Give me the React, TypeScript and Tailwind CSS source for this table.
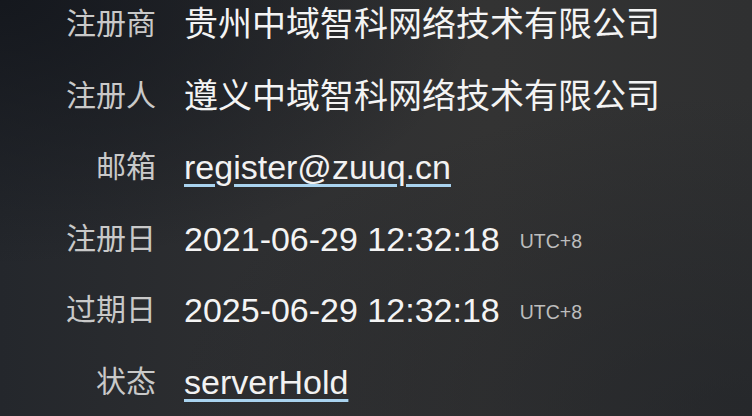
const rows: { label: string; value: string; kind?: "link" | "date" }[] = [
  { label: "注册商", value: "贵州中域智科网络技术有限公司" },
  { label: "注册人", value: "遵义中域智科网络技术有限公司" },
  { label: "邮箱", value: "register@zuuq.cn", kind: "link" },
  { label: "注册日", value: "2021-06-29 12:32:18", kind: "date" },
  { label: "过期日", value: "2025-06-29 12:32:18", kind: "date" },
  { label: "状态", value: "serverHold", kind: "link" },
];

export default function App() {
  return (
    <div
      className="w-[752px] h-[416px] overflow-hidden bg-[radial-gradient(ellipse_at_100%_100%,rgba(30,33,38,0.55),transparent_55%),radial-gradient(ellipse_at_0%_0%,rgba(20,23,29,0.95),transparent_45%),linear-gradient(to_right,#24272c,#2e2f31_35%,#333333_65%,#2f3031)]"
      style={{ fontFamily: '"Liberation Sans", Arial, "Noto Sans CJK SC", sans-serif' }}
    >
      <div className="flex flex-col gap-[23.5px]">
        {rows.map((r) => (
          <div key={r.label} className="flex items-center h-[48px]">
            <div className="w-[156px] shrink-0 text-right text-[30px] leading-none text-[#c9c9c9]">
              {r.label}
            </div>
            <div className="ml-[28px] flex items-baseline whitespace-nowrap">
              {r.kind === "link" ? (
                <span className="text-[34px] leading-none text-[#f2f2f2] underline decoration-[#a9d3ef] decoration-[3px] underline-offset-[5px]">
                  {r.value}
                </span>
              ) : (
                <span className="text-[34px] leading-none text-[#f4f4f4]">{r.value}</span>
              )}
              {r.kind === "date" && (
                <span className="ml-[20px] -translate-y-[3px] text-[19.5px] leading-none text-[#bdbdbd]">
                  UTC+8
                </span>
              )}
            </div>
          </div>
        ))}
      </div>
    </div>
  );
}
